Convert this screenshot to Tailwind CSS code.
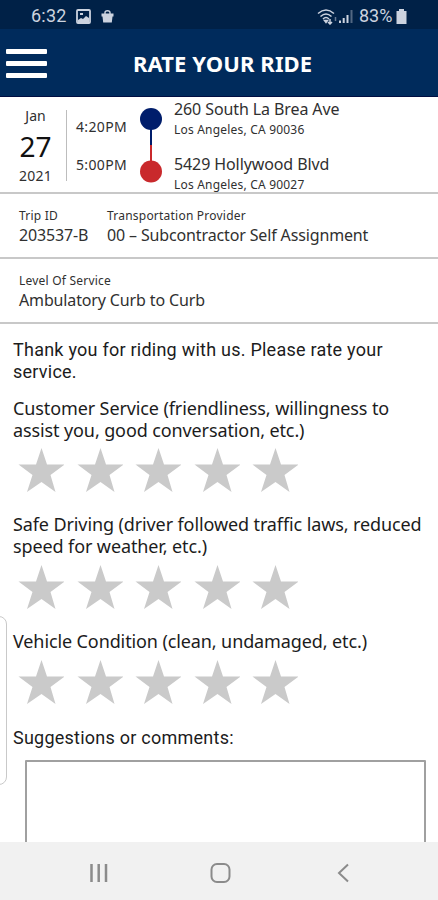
<!DOCTYPE html>
<html lang="en">
<head>
    <meta charset="UTF-8">
    <meta name="viewport" content="width=device-width, initial-scale=1.0">
    <title>Rate Your Ride</title>
    <script src="https://cdn.jsdelivr.net/npm/@tailwindcss/browser@4"></script>
</head>
<body class="bg-white font-['Noto_Sans',sans-serif] text-[#303030]">
<div class="relative flex h-[900px] w-[438px] flex-col overflow-hidden whitespace-nowrap">

    <!-- Status bar -->
    <div class="flex h-[29px] shrink-0 items-center bg-[#002147] pt-[3px] pl-[31px] font-[Roboto,sans-serif] text-[18px] leading-none text-[#ccd3df]">
        <span class="w-[45px] tracking-[0.2px]">6:32</span>
        <svg class="h-[15px] w-[15px]" viewBox="0 0 15 15" fill="none" stroke="currentColor"><rect x="1" y="1" width="13" height="13" rx="1" stroke-width="1.8"/><path d="M2 11l3-2 2 1 3-3 3 2v4H2z" fill="currentColor" stroke="none"/><path d="M4 4h3v2H4z" fill="currentColor" stroke="none"/></svg>
        <svg class="ml-[10px] h-[13px] w-[13px]" viewBox="0 0 13 13" fill="currentColor"><path d="M.500 3.500h12v3h-1l-.7 6H2.200l-.7-6h-1z"/><path d="M4 4V2.500a2.500 1.800 0 0 1 5 0V4" fill="none" stroke="currentColor" stroke-width="1.400"/></svg>
        <svg class="ml-[203px] h-[17px] w-[20px]" viewBox="0 0 20 17" fill="none" stroke="currentColor" stroke-width="1.500"><path d="M1 5.500q8-7 16 0M3.500 8.500q5.500-5 11 0M6 11q3-3 6 0"/><path d="M7.500 12.500h3L9 14.500zM13 11v5M11 14l2 2 2-2"/><path d="M18.500 9v4" opacity=".5"/></svg>
        <svg class="ml-[2px] h-[14px] w-[14px]" viewBox="0 0 14 14" fill="currentColor"><path d="M0 11.500h2V14H0zM3.700 9h2v5h-2zM7.500 6h2v8h-2z"/><path d="M11.500 1h2v13h-2z" opacity=".4"/></svg>
        <span class="ml-[6px] w-[37px]">83%</span>
        <svg class="h-[15px] w-[11px]" viewBox="0 0 11 15" fill="currentColor"><path d="M3 0h5v2h2.500v13H.500V2H3z"/></svg>
    </div>

    <!-- Title bar -->
    <header class="relative flex h-[68px] shrink-0 items-center border-b border-[#000e42] bg-[#002b5c]">
        <div class="ml-[6px] mt-[1px] flex flex-col gap-[7px]">
            <div class="h-[5px] w-[41px] rounded-[1px] bg-white"></div>
            <div class="h-[5px] w-[41px] rounded-[1px] bg-white"></div>
            <div class="h-[5px] w-[41px] rounded-[1px] bg-white"></div>
        </div>
        <h1 class="ml-[86px] mt-[1px] text-[22px] leading-none font-bold tracking-[0.1px] text-white">RATE YOUR RIDE</h1>
    </header>

    <!-- Trip summary -->
    <section class="flex h-[97px] shrink-0 border-b-2 border-[#c8c8c8]">
        <div class="flex w-[66px] flex-col items-center pt-[9px] pl-[5px]">
            <span class="text-[14px] leading-[20px]">Jan</span>
            <span class="text-[28px] leading-[40px] text-[#111]">27</span>
            <span class="text-[14px] leading-[20px] tracking-[0.3px]">2021</span>
        </div>
        <div class="mt-[13px] h-[71px] w-px bg-[#bdbdbd]"></div>
        <div class="ml-[9px] flex w-[63px] flex-col gap-[18px] pt-[20px] text-[14px] leading-[20px] tracking-[0.35px]">
            <span>4:20PM</span>
            <span>5:00PM</span>
        </div>
        <svg class="mt-[10px] h-[76px] w-[24px]" viewBox="0 0 24 76"><path d="M12 12v26" stroke="#001d6b" stroke-width="2"/><path d="M12 38v26" stroke="#c9292c" stroke-width="2"/><circle cx="12" cy="12" r="11" fill="#001d6b"/><circle cx="12" cy="64.500" r="11" fill="#c9292c"/></svg>
        <div class="ml-[11px] pt-[1px]">
            <div class="text-[16px] leading-[22px] tracking-[-0.1px]">260 South La Brea Ave</div>
            <div class="mt-[1px] text-[12px] leading-[18px] tracking-[0.2px]">Los Angeles, CA 90036</div>
            <div class="mt-[14px] text-[16px] leading-[22px] tracking-[-0.1px]">5429 Hollywood Blvd</div>
            <div class="mt-[1px] text-[12px] leading-[18px] tracking-[0.2px]">Los Angeles, CA 90027</div>
        </div>
    </section>

    <section class="flex h-[65px] shrink-0 border-b-2 border-[#c8c8c8] pt-[13px] pl-[19px]">
        <div class="w-[88px]">
            <div class="text-[12px] leading-[18px] tracking-[0.22px]">Trip ID</div>
            <div class="-mt-px text-[16px] leading-[22px] tracking-[-0.14px]">203537-B</div>
        </div>
        <div>
            <div class="text-[12px] leading-[18px] tracking-[0.22px]">Transportation Provider</div>
            <div class="-mt-px text-[16px] leading-[22px] tracking-[-0.14px]">00 – Subcontractor Self Assignment</div>
        </div>
    </section>

    <section class="h-[65px] shrink-0 border-b-2 border-[#c8c8c8] pt-[13px] pl-[19px]">
        <div class="text-[12px] leading-[18px] tracking-[0.22px]">Level Of Service</div>
        <div class="-mt-px text-[16px] leading-[22px] tracking-[-0.14px]">Ambulatory Curb to Curb</div>
    </section>

    <!-- Rating form -->
    <main class="flex min-h-0 flex-1 flex-col overflow-hidden pt-[15px] pl-[13px] text-[18px] leading-[22px] tracking-[-0.11px] text-[#1c1c1c]">
        <p class="font-[Roboto,sans-serif] tracking-[0.24px]">Thank you for riding with us. Please rate your<br>service.</p>

        <p class="mt-[14px]">Customer Service (friendliness, willingness to<br>assist you, good conversation, etc.)</p>
        <div class="stars mt-[7px] ml-[5px] flex h-[46px] gap-[12.500px]"></div>

        <p class="mt-[19px]">Safe Driving (driver followed traffic laws, reduced<br>speed for weather, etc.)</p>
        <div class="stars mt-[8px] ml-[5px] flex h-[46px] gap-[12.500px]"></div>

        <p class="mt-[19px]">Vehicle Condition (clean, undamaged, etc.)</p>
        <div class="stars mt-[8px] ml-[5px] flex h-[46px] gap-[12.500px]"></div>

        <p class="mt-[21px] font-[Roboto,sans-serif] tracking-[0.24px]">Suggestions or comments:</p>
        <div class="mt-[11px] ml-[12px] h-[140px] w-[401px] shrink-0 rounded-t-[1px] border-2 border-[#a0a0a0]"></div>
    </main>

    <!-- Edge panel handle -->
    <div class="absolute top-[616px] left-[-10px] h-[169px] w-[17px] rounded-[8px] border border-[#c9c9c9] bg-white"></div>

    <!-- System navigation -->
    <nav class="relative flex h-[58px] shrink-0 items-center bg-[#f1f1f1] pt-[4px] pl-[89px] text-[#8b8b8b]">
        <svg class="h-[20px] w-[20px]" viewBox="0 0 20 20" fill="none" stroke="currentColor" stroke-width="2.500"><path d="M2.500 1v18M9.700 1v18M17 1v18"/></svg>
        <svg class="ml-[101px] h-[22px] w-[22px]" viewBox="0 0 22 22" fill="none" stroke="currentColor" stroke-width="2"><rect x="1.500" y="2" width="18" height="18" rx="5.500"/></svg>
        <svg class="ml-[104px] h-[20px] w-[14px]" viewBox="0 0 14 20" fill="none" stroke="currentColor" stroke-width="2"><path d="M12 1.500L3 10l9 8.500"/></svg>
    </nav>
</div>

<script>
    // Fill every rating row with five empty stars
    const star = '<svg class="h-[46px] w-[46px]" viewBox="0 0 46 46" fill="#cacaca"><path d="M23.500 0L29 16.500 46.500 16.500 32.500 27 37.500 44 23.500 34 9 44 14.500 27 .500 16.500 18 16.500z"/></svg>';
    document.querySelectorAll('.stars').forEach(row => {
        row.innerHTML = star.repeat(5);
    });
</script>
</body>
</html>
